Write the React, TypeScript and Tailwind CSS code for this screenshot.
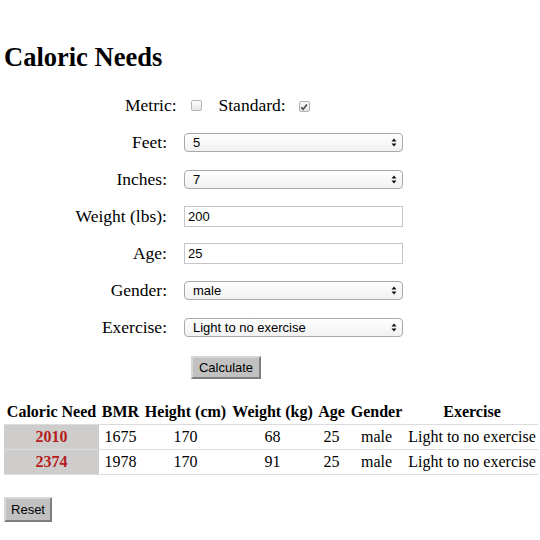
import React from "react";

const serif = { fontFamily: '"Liberation Serif", "Times New Roman", serif' };

type Row = {
  need: number;
  bmr: number;
  height: number;
  weight: number;
  age: number;
  gender: string;
  exercise: string;
};

const rows: Row[] = [
  { need: 2010, bmr: 1675, height: 170, weight: 68, age: 25, gender: "male", exercise: "Light to no exercise" },
  { need: 2374, bmr: 1978, height: 170, weight: 91, age: 25, gender: "male", exercise: "Light to no exercise" },
];

function Checkbox({ checked }: { checked?: boolean }) {
  return (
    <span className="inline-flex h-[11px] w-[11px] items-center justify-center rounded-[2px] border border-[#b4b4b4] bg-gradient-to-b from-[#fcfcfc] to-[#e6e6e6]">
      {checked && (
        <svg width="8" height="8" viewBox="0 0 8 8">
          <path d="M1.2 4.2 L3.1 6.2 L6.9 1.4" fill="none" stroke="#4a4a4a" strokeWidth="1.6" />
        </svg>
      )}
    </span>
  );
}

function Select({ value }: { value: string }) {
  return (
    <div className="flex h-[19px] w-[219px] items-center justify-between rounded-[4px] border border-[#a9a9a9] bg-gradient-to-b from-[#ffffff] to-[#f1f1f1] pl-[8px] pr-[5px] font-['Liberation_Sans',Arial,sans-serif] text-[13px] leading-none text-black">
      <span>{value}</span>
      <svg width="6" height="9" viewBox="0 0 6 9">
        <path d="M0.5 3.6 L3 0.6 L5.5 3.6 Z" fill="#111" />
        <path d="M0.5 5.4 L3 8.4 L5.5 5.4 Z" fill="#111" />
      </svg>
    </div>
  );
}

function TextInput({ value }: { value: string }) {
  return (
    <div className="flex h-[21px] w-[219px] items-center border border-[#c6c6c6] bg-white pl-[3px] font-['Liberation_Sans',Arial,sans-serif] text-[13px] leading-none text-black">
      {value}
    </div>
  );
}

function Button({ children, className }: { children: React.ReactNode; className?: string }) {
  return (
    <button
      className={
        "flex items-center justify-center border-2 border-t-[#d6d6d6] border-l-[#d6d6d6] border-r-[#7e7e7e] border-b-[#7e7e7e] bg-[#c1c1c1] font-['Liberation_Sans',Arial,sans-serif] text-[13px] leading-none text-black " +
        (className ?? "")
      }
    >
      {children}
    </button>
  );
}

function Field({ label, children }: { label: string; children: React.ReactNode }) {
  return (
    <div className="flex h-[37px] items-center">
      <div className="w-[163px] text-right text-[17.5px]" style={serif}>
        {label}
      </div>
      <div className="ml-[17px]">{children}</div>
    </div>
  );
}

export default function App() {
  return (
    <div className="min-h-[540px] w-[540px] bg-white pl-[4px] pt-[41px] text-black" style={serif}>
      <h1 className="text-[26.5px] font-bold leading-[32px]">Caloric Needs</h1>

      {/* form */}
      <div className="mt-[13px]">
        <div className="flex h-[38px] items-center pl-[121px] text-[17.5px]">
          <span>Metric:</span>
          <span className="ml-[14px]">
            <Checkbox />
          </span>
          <span className="ml-[17px]">Standard:</span>
          <span className="ml-[13px]">
            <Checkbox checked />
          </span>
        </div>
        <Field label="Feet:">
          <Select value="5" />
        </Field>
        <Field label="Inches:">
          <Select value="7" />
        </Field>
        <Field label="Weight (lbs):">
          <TextInput value="200" />
        </Field>
        <Field label="Age:">
          <TextInput value="25" />
        </Field>
        <Field label="Gender:">
          <Select value="male" />
        </Field>
        <Field label="Exercise:">
          <Select value="Light to no exercise" />
        </Field>
        <div className="mt-[10px] pl-[187px]">
          <Button className="h-[23px] w-[70px]">Calculate</Button>
        </div>
      </div>

      {/* results */}
      <table className="mt-[22px] w-[534px] table-fixed border-collapse text-[16px] leading-[18px]">
        <colgroup>
          <col className="w-[95px]" />
          <col className="w-[43px]" />
          <col className="w-[87px]" />
          <col className="w-[87px]" />
          <col className="w-[31px]" />
          <col className="w-[59px]" />
          <col className="w-[132px]" />
        </colgroup>
        <thead>
          <tr className="border-b border-[#dcdcdc]">
            {["Caloric Need", "BMR", "Height (cm)", "Weight (kg)", "Age", "Gender", "Exercise"].map((h) => (
              <th key={h} className="whitespace-nowrap px-0 pb-[3px] pt-[2px] text-center font-bold">
                {h}
              </th>
            ))}
          </tr>
        </thead>
        <tbody>
          {rows.map((r) => (
            <tr key={r.need} className="border-b border-[#dcdcdc]">
              <td className="bg-[#cfcdcc] pb-[3px] pt-[3px] text-center font-bold text-[#b51c1c]">{r.need}</td>
              <td className="pb-[3px] pt-[3px] text-center">{r.bmr}</td>
              <td className="pb-[3px] pt-[3px] text-center">{r.height}</td>
              <td className="pb-[3px] pt-[3px] text-center">{r.weight}</td>
              <td className="pb-[3px] pt-[3px] text-center">{r.age}</td>
              <td className="pb-[3px] pt-[3px] text-center">{r.gender}</td>
              <td className="whitespace-nowrap pb-[3px] pt-[3px] text-center">{r.exercise}</td>
            </tr>
          ))}
        </tbody>
      </table>

      <div className="mt-[22px]">
        <Button className="h-[25px] w-[48px]">Reset</Button>
      </div>
    </div>
  );
}
